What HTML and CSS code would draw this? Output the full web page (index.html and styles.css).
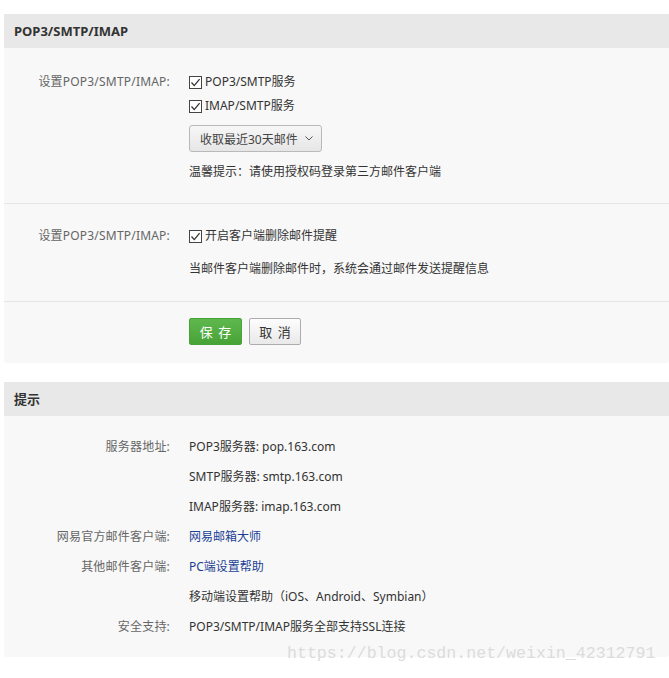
FILE: index.html
```html
<!DOCTYPE html>
<html lang="zh-CN">
<head>
<meta charset="utf-8">
<title>POP3/SMTP/IMAP</title>
<link rel="stylesheet" href="styles.css">
</head>
<body>
<div class="panel">
  <div class="panel-head">POP3/SMTP/IMAP</div>
  <div class="panel-body">
    <div class="section s1">
      <div class="form-row">
        <div class="label">设置POP3/SMTP/IMAP:</div>
        <div class="field">
          <label class="check"><span class="box"><svg viewBox="0 0 13 13" width="13" height="13"><path d="M2.5 6.5 L5.3 9.6 L10.6 3.2" fill="none" stroke="#333" stroke-width="1.3"/></svg></span>POP3/SMTP服务</label>
          <label class="check"><span class="box"><svg viewBox="0 0 13 13" width="13" height="13"><path d="M2.5 6.5 L5.3 9.6 L10.6 3.2" fill="none" stroke="#333" stroke-width="1.3"/></svg></span>IMAP/SMTP服务</label>
          <div class="select">收取最近30天邮件<svg class="chev" viewBox="0 0 8 5" width="8" height="5"><path d="M0.5 0.5 L4 4 L7.5 0.5" fill="none" stroke="#555" stroke-width="1"/></svg></div>
          <div class="hint">温馨提示：请使用授权码登录第三方邮件客户端</div>
        </div>
      </div>
    </div>
    <div class="section s2">
      <div class="form-row">
        <div class="label">设置POP3/SMTP/IMAP:</div>
        <div class="field">
          <label class="check"><span class="box"><svg viewBox="0 0 13 13" width="13" height="13"><path d="M2.5 6.5 L5.3 9.6 L10.6 3.2" fill="none" stroke="#333" stroke-width="1.3"/></svg></span>开启客户端删除邮件提醒</label>
          <div class="note">当邮件客户端删除邮件时，系统会通过邮件发送提醒信息</div>
        </div>
      </div>
    </div>
    <div class="section s3">
      <div class="form-row">
        <div class="label"></div>
        <div class="field buttons">
          <button class="btn btn-save">保 存</button>
          <button class="btn btn-cancel">取 消</button>
        </div>
      </div>
    </div>
  </div>
</div>

<div class="panel panel2">
  <div class="panel-head">提示</div>
  <div class="panel-body info">
    <div class="info-row"><div class="label">服务器地址:</div><div class="value">POP3服务器: pop.163.com</div></div>
    <div class="info-row"><div class="label"></div><div class="value">SMTP服务器: smtp.163.com</div></div>
    <div class="info-row"><div class="label"></div><div class="value">IMAP服务器: imap.163.com</div></div>
    <div class="info-row"><div class="label">网易官方邮件客户端:</div><div class="value"><a class="link" href="#">网易邮箱大师</a></div></div>
    <div class="info-row"><div class="label">其他邮件客户端:</div><div class="value"><a class="link" href="#">PC端设置帮助</a></div></div>
    <div class="info-row"><div class="label"></div><div class="value">移动端设置帮助（iOS、Android、Symbian）</div></div>
    <div class="info-row"><div class="label">安全支持:</div><div class="value">POP3/SMTP/IMAP服务全部支持SSL连接</div></div>
  </div>
</div>

<div class="watermark">https://blog.csdn.net/weixin_42312791</div>
</body>
</html>
```

FILE: styles.css
```css
html, body {
  margin: 0;
  padding: 0;
  background: #fff;
}
body {
  font-family: "Noto Sans", "Noto Sans CJK SC", sans-serif;
  font-size: 12px;
  color: #333;
  position: relative;
  min-height: 678px;
}
.panel {
  margin: 14px 0 0 4px;
  width: 665px;
}
.panel2 {
  margin-top: 19px;
}
.panel-head {
  height: 34px;
  line-height: 34px;
  background: #e8e8e8;
  padding-left: 10px;
  font-weight: bold;
  font-size: 13px;
  color: #333;
}
.panel-body {
  background: #f8f8f8;
  border-radius: 0 0 3px 3px;
}
.section {
  border-top: 1px solid #e6e6e6;
}
.section.s1 {
  border-top: none;
  padding: 22px 0 19px;
}
.section.s2 {
  padding: 20px 0 20px;
}
.section.s3 {
  padding: 16px 0 18px;
}
.form-row {
  display: grid;
  grid-template-columns: 166px 1fr;
  column-gap: 19px;
}
.label {
  text-align: right;
  color: #666;
  line-height: 24px;
  white-space: nowrap;
  letter-spacing: 0.2px;
}
.field {
  display: flex;
  flex-direction: column;
  align-items: flex-start;
}
.check {
  display: flex;
  align-items: center;
  height: 24px;
  line-height: 24px;
  color: #333;
}
.box {
  width: 13px;
  height: 13px;
  box-sizing: border-box;
  border: 1px solid #444;
  background: #fff;
  margin-right: 3px;
  display: flex;
}
.box svg {
  margin: -1px;
}
.select {
  margin-top: 7px;
  width: 133px;
  height: 27px;
  box-sizing: border-box;
  border: 1px solid #b9b9b9;
  border-radius: 3px;
  background: linear-gradient(#f7f7f7, #e6e6e6);
  display: flex;
  align-items: center;
  padding-left: 10px;
  color: #444;
}
.chev {
  margin-left: 7px;
}
.hint {
  margin-top: 8px;
  line-height: 24px;
}
.note {
  margin-top: 9px;
  line-height: 24px;
}
.buttons {
  flex-direction: row;
  gap: 7px;
}
.btn {
  height: 27px;
  box-sizing: border-box;
  border-radius: 2px;
  font-family: inherit;
  font-size: 13px;
  padding: 0;
  letter-spacing: 1px;
  text-indent: 1px;
  cursor: pointer;
}
.btn-save {
  width: 53px;
  border: 1px solid #47a23a;
  background: linear-gradient(#5fb84e, #48a337);
  color: #fff;
}
.btn-cancel {
  width: 52px;
  border: 1px solid #acacac;
  background: linear-gradient(#fdfdfd, #e9e9e9);
  color: #333;
}
.info {
  padding: 16px 0 15px;
}
.info-row {
  display: grid;
  grid-template-columns: 166px 1fr;
  column-gap: 19px;
  height: 30px;
  line-height: 30px;
}
.info-row .label {
  line-height: 30px;
}
.value {
  color: #333;
}
.link {
  color: #1c3f94;
  text-decoration: none;
}
.watermark {
  position: absolute;
  left: 287px;
  top: 644px;
  font-family: "Liberation Mono", "DejaVu Sans Mono", monospace;
  font-size: 16.6px;
  color: #dcdcdc;
  white-space: nowrap;
}
```
